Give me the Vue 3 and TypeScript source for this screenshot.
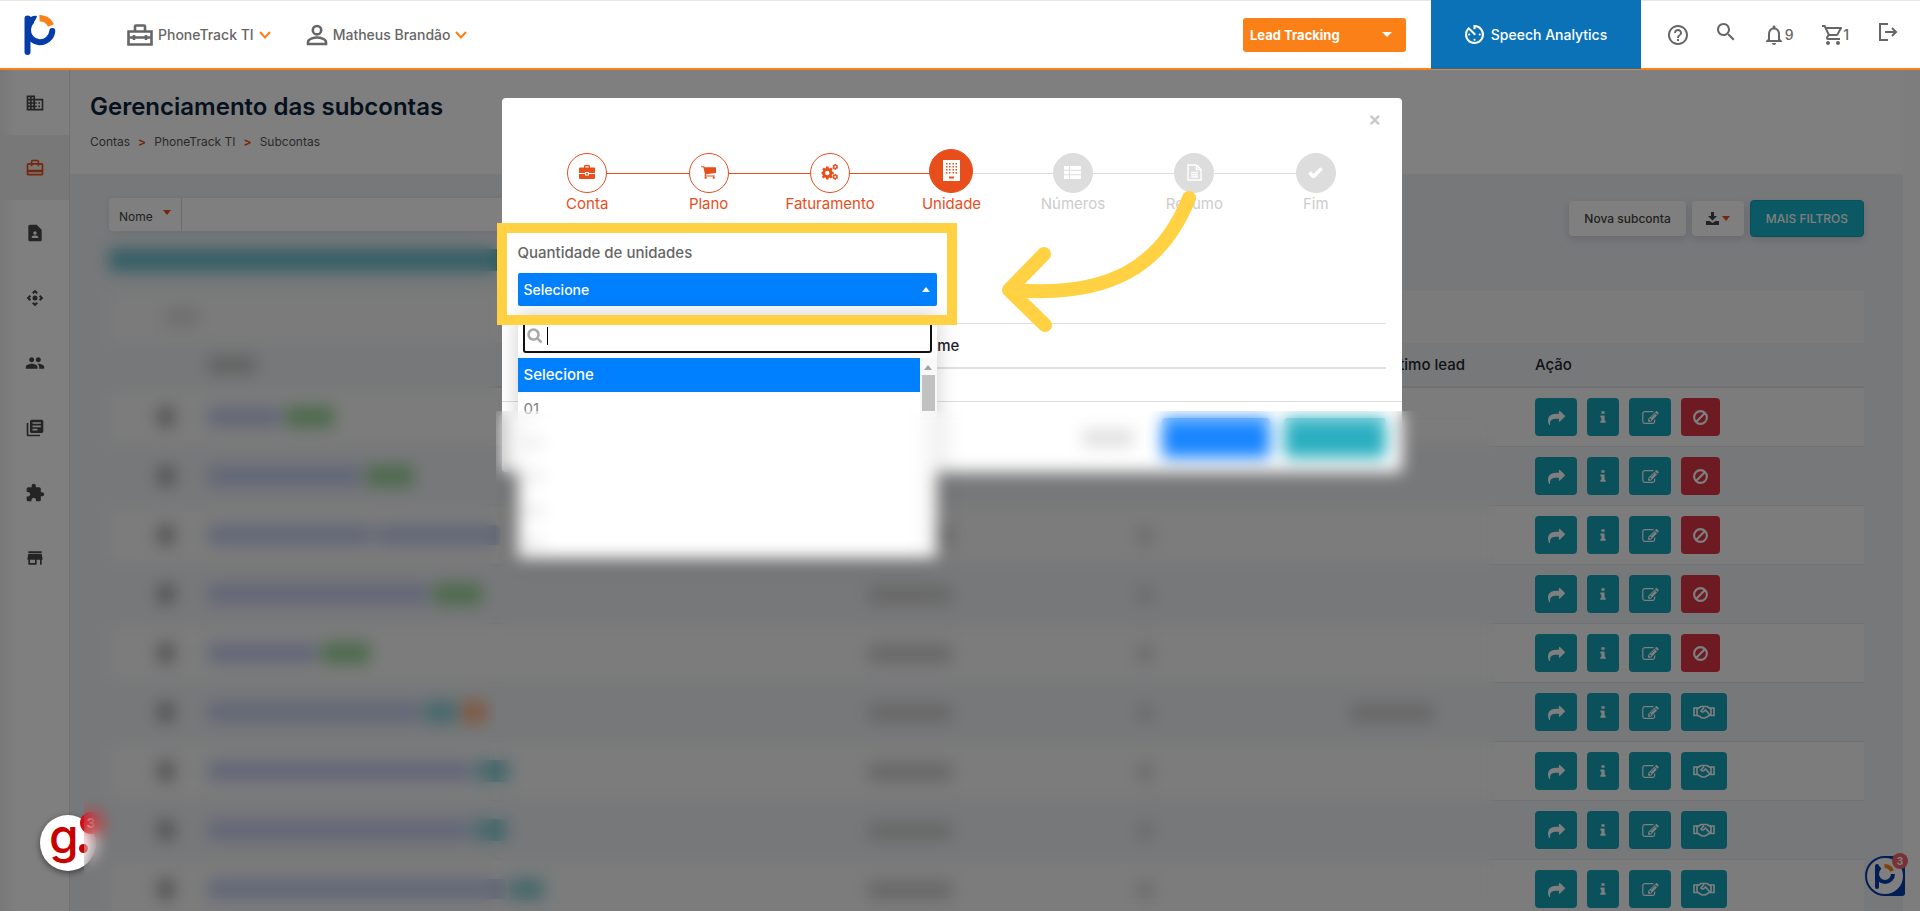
<script setup lang="ts">
import { h, ref } from 'vue'
import type { FunctionalComponent } from 'vue'

interface IconShape {
  box: string
  d: string
  stroke?: number
}

const icons: Record<string, IconShape> = {
  domain: { box: '0 0 24 24', d: 'M12 7V3H2v18h20V7H12zM6 19H4v-2h2v2zm0-4H4v-2h2v2zm0-4H4V9h2v2zm0-4H4V5h2v2zm4 12H8v-2h2v2zm0-4H8v-2h2v2zm0-4H8V9h2v2zm0-4H8V5h2v2zm10 12h-8v-2h2v-2h-2v-2h2v-2h-2V9h8v10zm-2-8h-2v2h2v-2zm0 4h-2v2h2v-2z' },
  travel: { box: '0 0 24 24', d: 'M20 6h-3V4c0-1.11-.89-2-2-2H9c-1.11 0-2 .89-2 2v2H4c-1.11 0-2 .89-2 2v11c0 1.11.89 2 2 2h16c1.11 0 2-.89 2-2V8c0-1.11-.89-2-2-2zM9 4h6v2H9V4zm11 15H4v-2h16v2zm0-5H4V8h3v2h2V8h6v2h2V8h3v6z' },
  contact: { box: '0 0 24 24', d: 'M14 2H6c-1.1 0-2 .9-2 2v16c0 1.1.9 2 2 2h12c1.1 0 2-.9 2-2V8l-6-6zm-2 8c1.1 0 2 .9 2 2s-.9 2-2 2-2-.9-2-2 .9-2 2-2zm4 8H8v-.57c0-.81.48-1.53 1.22-1.85.85-.37 1.79-.58 2.78-.58.99 0 1.93.21 2.78.58.74.32 1.22 1.04 1.22 1.85V18z' },
  camera: { box: '0 0 24 24', d: 'M15.54 5.54L13.77 7.3 12 5.54 10.23 7.3 8.46 5.54 12 2zm2.92 10l-1.76-1.77L18.46 12l-1.76-1.77 1.76-1.77L22 12zm-10 2.92l1.77-1.76L12 18.46l1.77-1.76 1.77 1.76L12 22zm-2.92-10l1.76 1.77L5.54 12l1.76 1.77-1.76 1.77L2 12zM12 9a3 3 0 1 0 0 6 3 3 0 0 0 0-6z' },
  people: { box: '0 0 24 24', d: 'M16 11c1.66 0 2.99-1.34 2.99-3S17.66 5 16 5c-1.66 0-3 1.34-3 3s1.34 3 3 3zm-8 0c1.66 0 2.99-1.34 2.99-3S9.66 5 8 5C6.34 5 5 6.34 5 8s1.34 3 3 3zm0 2c-2.33 0-7 1.17-7 3.5V19h14v-2.5c0-2.33-4.67-3.5-7-3.5zm8 0c-.29 0-.62.02-.97.05 1.16.84 1.97 1.97 1.97 3.45V19h6v-2.5c0-2.33-4.67-3.5-7-3.5z' },
  books: { box: '0 0 24 24', d: 'M4 6H2v14c0 1.1.9 2 2 2h14v-2H4V6zm16-4H8c-1.1 0-2 .9-2 2v12c0 1.1.9 2 2 2h12c1.1 0 2-.9 2-2V4c0-1.1-.9-2-2-2zm-1 9H9V9h10v2zm-4 4H9v-2h6v2zm4-8H9V5h10v2z' },
  puzzle: { box: '0 0 24 24', d: 'M20.5 11H19V7c0-1.1-.9-2-2-2h-4V3.5C13 2.12 11.88 1 10.5 1S8 2.12 8 3.5V5H4c-1.1 0-1.99.9-1.99 2v3.8H3.5c1.49 0 2.7 1.21 2.7 2.7s-1.21 2.7-2.7 2.7H2V20c0 1.1.9 2 2 2h3.8v-1.5c0-1.49 1.21-2.7 2.7-2.7 1.49 0 2.7 1.21 2.7 2.7V22H17c1.1 0 2-.9 2-2v-4h1.5c1.38 0 2.5-1.12 2.5-2.5S21.88 11 20.5 11z' },
  store: { box: '0 0 24 24', d: 'M20 4H4v2h16V4zm1 10v-2l-1-5H4l-1 5v2h1v6h10v-6h4v6h2v-6h1zm-9 4H6v-4h6v4z' },
  help: { box: '2 2 20 20', d: 'M11 18h2v-2h-2v2zm1-16C6.48 2 2 6.48 2 12s4.48 10 10 10 10-4.48 10-10S17.52 2 12 2zm0 18c-4.41 0-8-3.59-8-8s3.59-8 8-8 8 3.59 8 8-3.59 8-8 8zm0-14c-2.21 0-4 1.79-4 4h2c0-1.1.9-2 2-2s2 .9 2 2c0 2-3 1.75-3 5h2c0-2.25 3-2.5 3-5 0-2.21-1.79-4-4-4z' },
  search: { box: '3 3 18 18', d: 'M15.5 14h-.79l-.28-.27C15.41 12.59 16 11.11 16 9.5 16 5.91 13.09 3 9.5 3S3 5.91 3 9.5 5.91 16 9.5 16c1.61 0 3.09-.59 4.23-1.57l.27.28v.79l5 4.99L20.49 19l-4.99-5zm-6 0C7.01 14 5 11.99 5 9.5S7.01 5 9.5 5 14 7.01 14 9.5 11.99 14 9.5 14z' },
  bell: { box: '2 2 20 20', d: 'M12 22c1.1 0 2-.9 2-2h-4c0 1.1.9 2 2 2zm6-6v-5c0-3.07-1.63-5.64-4.5-6.32V4c0-.83-.67-1.5-1.5-1.5s-1.5.67-1.5 1.5v.68C7.64 5.36 6 7.92 6 11v5l-2 2v1h16v-1l-2-2zm-2 1H8v-6c0-2.48 1.51-4.5 4-4.5s4 2.02 4 4.5v6z' },
  cartLine: { box: '1 2 20 20', d: 'M15.55 13c.75 0 1.41-.41 1.75-1.03l3.58-6.49A.996.996 0 0020.01 4H5.21l-.94-2H1v2h2l3.6 7.59-1.35 2.44C4.52 15.37 5.48 17 7 17h12v-2H7l1.1-2h7.45zM6.16 6h12.15l-2.76 5H8.53L6.16 6zM7 18c-1.1 0-1.99.9-1.99 2S5.9 22 7 22s2-.9 2-2-.9-2-2-2zm10 0c-1.1 0-1.99.9-1.99 2s.89 2 1.99 2 2-.9 2-2-.9-2-2-2z' },
  logout: { box: '0 0 20 20', d: 'M10 2H2v16h8M7 10h11M14 6l4 4-4 4', stroke: 2 },
  toolbox: { box: '0 0 26 22', d: 'M1.5 7.5h23v13h-23zM8 7V2.5q0-1 1-1h8q1 0 1 1V7M1.500 13.500h23M7 11v5M19 11v5', stroke: 2.6 },
  person: { box: '0 0 22 22', d: 'M11 2a4.200 4.200 0 1 1 0 8.400a4.200 4.200 0 0 1 0-8.400zM2 20v-2c0-3 6-4.500 9-4.500s9 1.500 9 4.500v2z', stroke: 2.6 },
  chevron: { box: '0 0 12 8', d: 'M1 1l5 5.500L11 1', stroke: 2 },
  timer: { box: '3 3 18 18', d: 'M11 17c0 .55.45 1 1 1s1-.45 1-1-.45-1-1-1-1 .45-1 1zm0-14v4h2V5.080c3.390.490 6 3.390 6 6.920 0 3.870-3.130 7-7 7s-7-3.130-7-7c0-1.680.590-3.220 1.580-4.420L12 13l1.410-1.410-6.800-6.800v.020C4.420 6.450 3 9.050 3 12c0 4.970 4.020 9 9 9 4.970 0 9-4.030 9-9s-4.030-9-9-9h-1zm7 9c0-.55-.45-1-1-1s-1 .45-1 1 .45 1 1 1 1-.45 1-1zM6 12c0 .55.45 1 1 1s1-.45 1-1-.45-1-1-1-1 .45-1 1z' },
  share: { box: '0 0 1792 1536', d: 'M1792 640q0 26-19 45l-512 512q-19 19-45 19t-45-19-19-45v-256h-224q-98 0-175.5 6t-154 21.5-133 42.5-105.5 69.5-80 101-48.5 138.500-17.500 181q0 55 5 123 0 6 2.500 23.500t2.500 26.500q0 15-8.500 25t-23.500 10q-16 0-28-17-7-9-13-22t-13.500-30-10.500-24Q0 1286 0 1120q0-199 53-333 162-403 875-403h224v-256q0-26 19-45t45-19 45 19l512 512q19 19 19 45z' },
  info: { box: '-400 0 1440 1664', d: 'M640 1344v128q0 26-19 45t-45 19h-512q-26 0-45-19t-19-45v-128q0-26 19-45t45-19h64v-384h-64q-26 0-45-19t-19-45v-128q0-26 19-45t45-19h384q26 0 45 19t19 45v576h64q26 0 45 19t19 45zm-128-1152v192q0 26-19 45t-45 19h-256q-26 0-45-19t-19-45v-192q0-26 19-45t45-19h256q26 0 45 19t19 45z' },
  edit: { box: '0 128 1792 1408', d: 'M888 1184l116-116-152-152-116 116v56h96v96h56zm440-720q-16-16-33 1l-350 350q-17 17-1 33t33-1l350-350q17-17 1-33zm80 594v190q0 119-84.500 203.500t-203.500 84.500h-832q-119 0-203.500-84.500t-84.500-203.500v-832q0-119 84.500-203.500t203.500-84.500h832q63 0 117 25 15 7 18 23 3 17-9 29l-49 49q-14 14-32 8-23-6-45-6h-832q-66 0-113 47t-47 113v832q0 66 47 113t113 47h832q66 0 113-47t47-113v-126q0-13 9-22l64-64q15-15 35-7t20 29zm-96-738l288 288-672 672h-288v-288zm444 132l-92 92-288-288 92-92q28-28 68-28t68 28l152 152q28 28 28 68t-28 68z' },
  ban: { box: '0 0 16 16', d: 'M8 2a6 6 0 1 1 0 12a6 6 0 0 1 0-12zM3.800 12.200l8.400-8.400', stroke: 2 },
  handshake: { box: '0 0 22 14', d: 'M1 3h3v7.500H1zM21 3h-3v7.500h3zM4 4L8 1.500h6L18 4M4 10l5 3h3l6-3.500M11 2.500L8 6q1.500 2 3.500 0l1-1 4 4.500', stroke: 1.6 },
  briefcase: { box: '0 0 16 14', d: 'M5 2.500V1.200Q5 0 6.200 0h3.600Q11 0 11 1.200v1.300h4q1 0 1 1V8H10V7H6v1H0V3.500q0-1 1-1zM6.300 1.300v1.200h3.400V1.300zM0 9h6v1.500h4V9h6v4q0 1-1 1H1q-1 0-1-1zM7 8h2v1.500H7z' },
  cart: { box: '0 250 1664 1420', d: 'M640 1536q0 52-38 90t-90 38-90-38-38-90 38-90 90-38 90 38 38 90zm896 0q0 52-38 90t-90 38-90-38-38-90 38-90 90-38 90 38 38 90zm128-1088v512q0 24-16.500 42.500t-40.500 21.500l-1044 122q13 60 13 70 0 16-24 64h920q26 0 45 19t19 45-19 45-45 19h-1024q-26 0-45-19t-19-45q0-11 8-31.500t16-36 21.500-40 15.500-29.500l-177-823h-204q-26 0-45-19t-19-45 19-45 45-19h256q16 0 28.500 6.500t19.500 15.500 13 24.500 8 26 5.500 29.500 4.500 26h1201q26 0 45 19t19 45z' },
  gears: { box: '0 0 17 16', d: 'M4.600 2.500h2.400l.3 1.700 1 .4 1.400-1 1.500 1.600-1 1.400.4 1 1.600.3v2.300l-1.600.3-.4 1 1 1.400-1.600 1.500-1.400-1-1 .5-.3 1.600H4.600l-.3-1.700-1-.4-1.400 1-1.500-1.600 1-1.400-.5-1L0 9.900V7.900l1.300-.3.4-1-1-1.400 1.600-1.600 1.400 1 .6-.3zM5.800 6.800a2.200 2.200 0 1 0 0 4.400a2.200 2.200 0 0 0 0-4.400zM13 0h1.500l.3 1 .9-.2.8 1.200-.6.8.6.9-.8 1.200-.9-.3-.3 1.100H13l-.3-1-1 .2-.7-1.200.6-.9-.6-.8.7-1.200 1 .2zM13.700 1.800a1 1 0 1 0 0 2a1 1 0 0 0 0-2zM13 10h1.500l.3 1 .9-.2.8 1.200-.6.8.6.9-.8 1.200-.9-.3-.3 1.100H13l-.3-1-1 .2-.7-1.200.6-.9-.6-.8.7-1.200 1 .2zM13.700 11.800a1 1 0 1 0 0 2a1 1 0 0 0 0-2z' },
  building: { box: '0 0 17 21', d: 'M0 0h17v21H0zM3 3v1.500h1.500V3zM6 3v1.500h1.500V3zM9.500 3v1.500H11V3zM12.500 3v1.500H14V3zM3 6v1.500h1.500V6zM6 6v1.500h1.500V6zM9.500 6v1.500H11V6zM12.500 6v1.500H14V6zM3 9v1.500h1.500V9zM6 9v1.500h1.500V9zM9.500 9v1.500H11V9zM12.500 9v1.500H14V9zM3 12v1.500h1.500V12zM6 12v1.500h1.500V12zM9.500 12v1.500H11V12zM12.500 12v1.500H14V12zM6 16.500v2h5v-2z' },
  list: { box: '0 0 17 13', d: 'M0 0h5v3.700H0zM6 0h11v3.700H6zM0 4.700h5v3.600H0zM6 4.700h11v3.600H6zM0 9.300h5V13H0zM6 9.300h11V13H6z' },
  doc: { box: '0 0 15 17', d: 'M1 1h8.500L14 5.500V16H1zM9.500 1v4.500H14M4 8.500h7M4 10.700h7M4 13h7', stroke: 1.4 },
  check: { box: '0 0 15 11', d: 'M1.500 5.500l4 4 8-8', stroke: 3.6 },
  download: { box: '0 0 13 13', d: 'M5 0h3v4h3L6.500 8.500 2 4h3zM0 9h3.500l3 2 3-2H13v4H0z' },
  lens: { box: '0 0 16 16', d: 'M6.500 1.500a5 5 0 1 1 0 10a5 5 0 0 1 0-10zM10.200 10.200L14.500 14.500', stroke: 2.6 },
}

const Icon: FunctionalComponent<{ name: string; w: number; h?: number }> = (props) => {
  const shape = icons[props.name]
  return h(
    'svg',
    { viewBox: shape.box, width: props.w, height: props.h ?? props.w, 'aria-hidden': 'true' },
    [
      h('path', {
        d: shape.d,
        'fill-rule': 'evenodd',
        fill: shape.stroke ? 'none' : 'currentColor',
        stroke: shape.stroke ? 'currentColor' : 'none',
        'stroke-width': shape.stroke ?? 0,
      }),
    ],
  )
}
Icon.props = ['name', 'w', 'h']

const sidebar = [
  { icon: 'domain', label: 'Empresa' },
  { icon: 'travel', label: 'Contas' },
  { icon: 'contact', label: 'Contatos' },
  { icon: 'camera', label: 'Rotas' },
  { icon: 'people', label: 'Pessoas' },
  { icon: 'books', label: 'Biblioteca' },
  { icon: 'puzzle', label: 'Extensões' },
  { icon: 'store', label: 'Loja' },
]

const steps = [
  { label: 'Conta', icon: 'briefcase', w: 16, h: 14, state: 'done' },
  { label: 'Plano', icon: 'cart', w: 15, h: 13, state: 'done' },
  { label: 'Faturamento', icon: 'gears', w: 18, h: 16, state: 'done' },
  { label: 'Unidade', icon: 'building', w: 17, h: 21, state: 'active' },
  { label: 'Números', icon: 'list', w: 17, h: 13, state: 'todo' },
  { label: 'Resumo', icon: 'doc', w: 15, h: 17, state: 'todo' },
  { label: 'Fim', icon: 'check', w: 15, h: 11, state: 'todo' },
]

interface Row {
  name: number[]
  tags: { tone: string; w: number }[]
  date?: boolean
  lead?: boolean
  blocked?: boolean
}

const rows: Row[] = [
  { name: [74], tags: [{ tone: 'green', w: 48 }], blocked: true },
  { name: [154], tags: [{ tone: 'green', w: 48 }], blocked: true },
  { name: [164, 124], tags: [], date: true, blocked: true },
  { name: [222], tags: [{ tone: 'green', w: 48 }], date: true, blocked: true },
  { name: [110], tags: [{ tone: 'green', w: 48 }], date: true, blocked: true },
  { name: [212], tags: [{ tone: 'teal', w: 34 }, { tone: 'orange', w: 24 }], date: true, lead: true },
  { name: [264], tags: [{ tone: 'teal', w: 34 }], date: true },
  { name: [262], tags: [{ tone: 'teal', w: 34 }], date: true },
  { name: [298], tags: [{ tone: 'teal', w: 34 }], date: true },
]

const options = ['Selecione', '01', '02', '03', '04', '05']
const quantity = ref('Selecione')
const query = ref('')
</script>

<template>
  <div class="page">
    <header class="topbar">
      <a href="#" class="brand" aria-label="PhoneTrack">
        <svg viewBox="0 0 32 40" width="32" height="40">
          <path d="M3.500 3.500V37" stroke="#053ca8" stroke-width="6" stroke-linecap="round" />
          <path d="M1 2Q4 0 7 2q3-2 6-1-1 5-6 8z" fill="#053ca8" />
          <path d="M28.300 16A12 12 0 0 1 4 14Q5 9 7 7" fill="none" stroke="#053ca8" stroke-width="6" stroke-linecap="round" />
          <path d="M15.500 3.200A12 12 0 0 1 27 10.500" fill="none" stroke="#fc8018" stroke-width="6.400" />
        </svg>
      </a>
      <button class="menu account"><Icon name="toolbox" :w="26" :h="22" />PhoneTrack TI<Icon class="chev" name="chevron" :w="12" :h="8" /></button>
      <button class="menu user"><Icon name="person" :w="22" />Matheus Brandão<Icon class="chev" name="chevron" :w="12" :h="8" /></button>
      <button class="product">Lead Tracking<span class="tri down"></span></button>
      <a href="#" class="speech"><Icon name="timer" :w="19" />Speech Analytics</a>
      <nav class="tools" aria-label="Ferramentas">
        <button aria-label="Ajuda"><Icon name="help" :w="20" /></button>
        <button aria-label="Buscar" class="high"><Icon name="search" :w="18" /></button>
        <button aria-label="Notificações"><Icon name="bell" :w="20" />9</button>
        <button aria-label="Carrinho"><Icon name="cartLine" :w="20" />1</button>
        <button aria-label="Sair" class="high"><Icon name="logout" :w="20" /></button>
      </nav>
    </header>

    <div class="body">
      <aside class="side">
        <a v-for="(item, i) in sidebar" :key="item.icon" href="#" :aria-label="item.label" :class="{ current: i === 1 }">
          <Icon :name="item.icon" :w="20" />
        </a>
      </aside>
      <main class="content">
        <section class="heading">
          <h1>Gerenciamento das subcontas</h1>
          <nav class="crumbs" aria-label="Trilha">
            <a href="#">Contas</a><b>&gt;</b><a href="#">PhoneTrack TI</a><b>&gt;</b><span>Subcontas</span>
          </nav>
        </section>
        <section class="panel">
          <div class="filters">
            <div class="search">
              <button>Nome<span class="tri down red"></span></button>
              <input type="text" aria-label="Pesquisar por nome" />
            </div>
            <div class="actions">
              <button>Nova subconta</button>
              <button class="dl" aria-label="Baixar"><Icon name="download" :w="13" /><span class="tri down red"></span></button>
              <button class="more">MAIS FILTROS</button>
            </div>
          </div>
          <div class="notice"></div>
          <div class="caption"><i class="smudge grey"></i></div>
          <table class="grid">
            <colgroup>
              <col class="c1" /><col class="c2" /><col class="c3" /><col class="c4" /><col class="c5" /><col />
            </colgroup>
            <thead>
              <tr>
                <th></th>
                <th><i class="smudge dark"></i></th>
                <th></th>
                <th></th>
                <th class="last">Último lead</th>
                <th>Ação</th>
              </tr>
            </thead>
            <tbody>
              <tr v-for="(row, i) in rows" :key="i">
                <td class="pick"><i class="smudge box"></i></td>
                <td>
                  <div class="names">
                    <i v-for="(w, n) in row.name" :key="n" class="smudge link" :style="{ width: w + 'px' }"></i>
                    <i v-for="tag in row.tags" :key="tag.tone" class="smudge tag" :class="tag.tone" :style="{ width: tag.w + 'px' }"></i>
                  </div>
                </td>
                <td><i v-if="row.date" class="smudge date"></i></td>
                <td><i v-if="row.date" class="smudge num"></i></td>
                <td><i v-if="row.lead" class="smudge date"></i></td>
                <td>
                  <div class="ops">
                    <button class="w42" aria-label="Acessar"><Icon name="share" :w="17" :h="15" /></button>
                    <button class="w32" aria-label="Detalhes"><Icon name="info" :w="12" :h="14" /></button>
                    <button class="w42" aria-label="Editar"><Icon name="edit" :w="17" :h="13" /></button>
                    <button v-if="row.blocked" class="w39 danger" aria-label="Bloquear"><Icon name="ban" :w="17" /></button>
                    <button v-else class="w46" aria-label="Parceria"><Icon name="handshake" :w="22" :h="14" /></button>
                  </div>
                </td>
              </tr>
            </tbody>
          </table>
        </section>
      </main>
      <button class="chat" aria-label="Chat">
        <svg viewBox="0 0 40 40" width="40" height="40">
          <path d="M20 0H40V37q0 3-3 3H20z" fill="#053ca8" />
          <circle cx="20" cy="20" r="19" fill="#fff" stroke="#053ca8" stroke-width="2" />
          <path d="M38.500 20Q38 36 22 39h15q2 0 2-2z" fill="#053ca8" />
          <path d="M12 10v21" stroke="#053ca8" stroke-width="4" stroke-linecap="round" />
          <path d="M28 18a8 8 0 0 1-16 0q0-4 3-7" fill="none" stroke="#053ca8" stroke-width="4" />
          <path d="M19.500 10a8 8 0 0 1 7.500 5" fill="none" stroke="#fc8018" stroke-width="4" />
        </svg>
        <span>3</span>
      </button>
    </div>

    <div class="overlay">
      <div class="modal" role="dialog" aria-label="Nova subconta">
        <div class="modal-head"><button aria-label="Fechar">×</button></div>
        <ol class="steps">
          <li v-for="step in steps" :key="step.label" :class="step.state">
            <span class="dot"><Icon :name="step.icon" :w="step.w" :h="step.h" /></span>
            <span>{{ step.label }}</span>
          </li>
        </ol>
        <div class="field">
          <label for="quantity">Quantidade de unidades</label>
          <div class="picker">
            <select id="quantity" v-model="quantity">
              <option v-for="o in options" :key="o" :value="o">{{ o }}</option>
            </select>
            <span class="tri up"></span>
          </div>
          <div class="drop">
            <div class="find">
              <Icon name="lens" :w="16" />
              <span class="cursor"></span>
              <input v-model="query" type="text" aria-label="Pesquisar quantidade" />
            </div>
            <div class="scroller">
              <ul role="listbox">
                <li v-for="o in options" :key="o" role="option" :class="{ on: o === quantity }">{{ o }}</li>
              </ul>
              <div class="bar"><span class="tri up small"></span><span class="thumb"></span></div>
            </div>
          </div>
          <div class="mark"></div>
        </div>
        <table class="units">
          <thead>
            <tr><th class="half"></th><th>Nome</th></tr>
          </thead>
        </table>
        <div class="modal-foot">
          <i class="smudge cancel"></i>
          <i class="smudge back"></i>
          <i class="smudge next"></i>
        </div>
        <svg class="arrow" viewBox="0 0 208 156" width="208" height="156" fill="none" stroke="#ffd143" stroke-width="14" stroke-linecap="round" stroke-linejoin="round" aria-hidden="true">
          <path d="M189 18C163 84 112 118 14 110M44 74L9 110L45 145" />
        </svg>
      </div>
    </div>

    <button class="guide" aria-label="Guia"><span class="g">g</span><span class="point"></span><span class="count">3</span></button>
    <div class="frost left"></div>
    <div class="frost lower"></div>
  </div>
</template>

<style>
body {
  margin: 0;
  background: #fff;
}
</style>

<style scoped>
.page {
  position: relative;
  height: 100vh;
  overflow: hidden;
  font-family: Inter, 'Liberation Sans', sans-serif;
  font-size: 14px;
  color: #212529;
}
.page *,
.page *::before,
.page *::after {
  box-sizing: border-box;
}
button,
input,
select {
  font: inherit;
  color: inherit;
  border: 0;
  padding: 0;
  margin: 0;
  background: none;
}
a {
  color: inherit;
  text-decoration: none;
}
svg {
  display: block;
  flex: none;
}
.tri {
  width: 0;
  height: 0;
  border: 5px solid transparent;
}
.tri.down {
  border-top-color: #fff;
  border-bottom: 0;
}
.tri.up {
  border-width: 4px;
  border-bottom: 5px solid #fff;
  border-top: 0;
}
.tri.red {
  border-width: 4px;
  border-top-width: 5px;
  border-bottom: 0;
  border-top-color: #e84e1b;
}

/* top bar */
.topbar {
  display: flex;
  align-items: center;
  height: 70px;
  border-top: 1px solid #e8e8e8;
  border-bottom: 2px solid #fc8018;
  background: #fff;
  color: #666;
  font-weight: 500;
}
.brand {
  margin: 0 71px 0 24px;
}
.menu {
  display: flex;
  align-items: center;
  gap: 5px;
}
.account {
  margin-right: 35px;
}
.chev {
  color: #fc8018;
}
.product {
  display: flex;
  align-items: center;
  justify-content: space-between;
  width: 163px;
  height: 34px;
  margin: 0 25px 0 auto;
  padding: 0 14px 0 7px;
  border-radius: 3px;
  background: #fc8018;
  color: #fff;
  font-size: 13px;
  font-weight: 700;
}
.speech {
  display: flex;
  align-items: center;
  justify-content: center;
  gap: 7px;
  align-self: stretch;
  width: 210px;
  margin: -1px 0;
  background: #0b72b7;
  color: #fff;
}
.tools {
  display: flex;
  align-items: center;
  justify-content: space-between;
  width: 230px;
  margin: 0 22px 0 27px;
}
.tools button {
  display: flex;
  align-items: center;
  gap: 1px;
}
.tools .high {
  padding-bottom: 6px;
}

/* page body */
.body {
  position: relative;
  display: flex;
  height: calc(100% - 70px);
  padding-right: 17px;
  background: #fafafa;
}
.side {
  width: 70px;
  flex: none;
  border-right: 1px solid #e2e2e2;
  background: linear-gradient(90deg, #f0f0f0, #fff 16px);
}
.side a {
  display: flex;
  align-items: center;
  justify-content: center;
  height: 65px;
  color: #484848;
}
.side .current {
  background: #f1f1f1;
  color: #e84e1b;
}
.content {
  flex: 1;
  min-width: 0;
  background: #eef1f5;
}
.heading {
  height: 104px;
  padding: 22px 20px 0;
  background: #fff;
}
h1 {
  margin: 0;
  font-size: 24px;
  line-height: 30px;
  font-weight: 600;
  color: #0b2239;
}
.crumbs {
  display: flex;
  gap: 8px;
  margin-top: 12px;
  font-size: 12px;
  line-height: 16px;
  color: #555;
}
.crumbs b {
  color: #e84e1b;
}
.panel {
  padding: 24px 39px 0;
}
.filters {
  display: flex;
  justify-content: space-between;
}
.search {
  display: flex;
  width: 520px;
  height: 33px;
  border-radius: 4px;
  background: #fff;
  box-shadow: 0 2px 8px rgba(60, 70, 120, 0.12);
}
.search button {
  display: flex;
  justify-content: space-between;
  align-items: center;
  width: 73px;
  padding: 3px 10px 0;
  border-right: 1px solid #d6d6d6;
  font-size: 12px;
  color: #444;
}
.search .tri {
  margin-bottom: 8px;
}
.search input {
  flex: 1;
  min-width: 0;
}
.actions {
  display: flex;
  align-items: center;
  gap: 6px;
  height: 39px;
  padding-top: 2px;
}
.actions button {
  height: 35px;
  padding: 0 15px;
  border-radius: 4px;
  background: #fff;
  box-shadow: 0 3px 8px rgba(60, 60, 100, 0.18);
  font-size: 12px;
  font-weight: 500;
  color: #444;
}
.actions .dl {
  display: flex;
  align-items: center;
  gap: 3px;
  padding: 0 14px;
}
.actions .more {
  height: 37px;
  border: 1px solid #14a0b6;
  background: #17b2c8;
  color: #fff;
}
.notice {
  width: 390px;
  height: 22px;
  margin: 12px 0 20px;
  background: #64bcc8;
}
.caption {
  display: flex;
  align-items: center;
  height: 52px;
  padding-left: 56px;
  background: #f6f6f6;
}
.grid {
  width: 100%;
  table-layout: fixed;
  border-collapse: separate;
  border-spacing: 0;
}
.c1 {
  width: 99px;
}
.c2 {
  width: 660px;
}
.c3 {
  width: 262px;
}
.c4 {
  width: 220px;
}
.c5 {
  width: 185px;
}
.grid th {
  height: 45px;
  padding: 0;
  border-bottom: 2px solid #dee2e6;
  text-align: left;
  font-size: 15px;
  font-weight: 500;
}
.grid .last {
  padding-right: 70px;
  text-align: right;
}
.grid td {
  height: 59px;
  padding: 0;
  border-bottom: 1px solid #e0e2e5;
}
.grid tbody tr:nth-child(odd) td {
  background: #f8f8f8;
}
.pick {
  text-align: center;
}
.names {
  display: flex;
  align-items: center;
  gap: 4px;
}
.smudge {
  display: inline-block;
  height: 18px;
  border-radius: 4px;
  vertical-align: middle;
}
.smudge.link {
  height: 20px;
  background: #c4cfee;
}
.smudge.tag {
  height: 22px;
}
.smudge.green {
  background: #9cd49a;
}
.smudge.teal {
  background: #8fd0d8;
}
.smudge.orange {
  background: #ffb080;
}
.smudge.box {
  width: 16px;
  height: 20px;
  margin-left: 14px;
  background: #a0a0a0;
}
.smudge.grey {
  width: 34px;
  background: #dcdcdc;
}
.smudge.dark {
  width: 48px;
  background: #c4c4c4;
}
.smudge.date {
  width: 84px;
  background: #cfcfcf;
}
.smudge.num {
  width: 14px;
  margin-left: 8px;
  background: #d2d2d2;
}
.ops {
  display: flex;
  gap: 10px;
}
.ops button {
  display: flex;
  align-items: center;
  justify-content: center;
  height: 38px;
  border-radius: 4px;
  background: #17a2b8;
  color: #fff;
}
.ops .w42 {
  width: 42px;
}
.ops .w32 {
  width: 32px;
}
.ops .w39 {
  width: 39px;
}
.ops .w46 {
  width: 46px;
}
.ops .danger {
  background: #dc3545;
}
.chat {
  position: absolute;
  right: 15px;
  bottom: 15px;
}
.chat span {
  position: absolute;
  top: -3px;
  right: -3px;
  width: 16px;
  border-radius: 8px;
  background: #f0656b;
  color: #fff;
  font-size: 10px;
  line-height: 16px;
  font-weight: 700;
}

/* dialog */
.overlay {
  position: absolute;
  inset: 70px 0 0;
  display: flex;
  justify-content: center;
  align-items: flex-start;
  padding: 28px 17px 0 0;
  background: rgba(0, 0, 0, 0.5);
}
.modal {
  position: relative;
  width: 900px;
  border-radius: 4px;
  background: #fff;
}
.modal-head {
  display: flex;
  justify-content: flex-end;
  height: 51px;
  padding: 10px 20px 0 0;
}
.modal-head button {
  height: 22px;
  font-size: 20px;
  line-height: 22px;
  font-weight: 600;
  color: #c8c8c8;
}
.steps {
  display: grid;
  grid-template-columns: repeat(7, 1fr);
  margin: 0 25px;
  padding: 0;
  list-style: none;
  font-size: 15px;
  line-height: 22px;
}
.steps li {
  position: relative;
  display: flex;
  flex-direction: column;
  align-items: center;
  justify-content: flex-end;
  height: 66px;
  color: #e84e1b;
}
.steps li::before {
  content: '';
  position: absolute;
  top: 24px;
  left: 50%;
  width: 100%;
  height: 1px;
  background: #e84e1b;
}
.steps .active::before,
.steps .todo::before {
  background: #ddd;
}
.steps li:last-child::before {
  display: none;
}
.dot {
  position: relative;
  display: flex;
  align-items: center;
  justify-content: center;
  width: 40px;
  height: 40px;
  padding-bottom: 2px;
  border: 1px solid #e84e1b;
  border-radius: 50%;
  background: #fff;
}
.active .dot {
  width: 44px;
  height: 44px;
  background: #e84e1b;
  color: #fff;
}
.steps .todo {
  color: #ccc;
}
.todo .dot {
  border-color: #ddd;
  background: #ddd;
  color: #fff;
}
.field {
  position: relative;
  width: calc(50% - 31px);
  margin: 28px 16px 17px;
}
.field label {
  display: block;
  margin-bottom: 10px;
  font-size: 15px;
  line-height: 20px;
  font-weight: 500;
  color: #666;
}
.picker {
  position: relative;
}
.picker select {
  display: block;
  width: 100%;
  height: 33px;
  padding: 0 6px;
  border-radius: 2px;
  appearance: none;
  background: #0080ff;
  color: #fff;
  font-weight: 500;
}
.picker .tri {
  position: absolute;
  top: 14px;
  right: 7px;
}
.drop {
  position: absolute;
  top: 72px;
  left: 0;
  right: 0;
  background: #fff;
  box-shadow: 0 0 20px rgba(0, 0, 0, 0.2);
}
.find {
  display: flex;
  align-items: center;
  gap: 4px;
  height: 34px;
  margin: 4px 5px 5px;
  padding: 0 4px 0 2px;
  border: 2px solid #101010;
  border-radius: 3px;
  color: #aaa;
}
.cursor {
  width: 1px;
  height: 18px;
  background: #000;
}
.find input {
  flex: 1;
  outline: 0;
}
.scroller {
  display: flex;
  height: 200px;
  overflow: hidden;
}
.scroller ul {
  flex: 1;
  margin: 0;
  padding: 0;
  list-style: none;
}
.scroller li {
  height: 34px;
  padding: 0 6px;
  font-size: 15px;
  line-height: 34px;
  color: #808080;
}
.scroller li:nth-child(n + 3) {
  color: #c4c4c4;
}
.scroller .on {
  background: #0080ff;
  color: #fff;
  font-weight: 500;
}
.bar {
  display: flex;
  flex-direction: column;
  align-items: center;
  width: 17px;
  padding-top: 7px;
  background: #f8f8f8;
}
.bar .tri {
  border-bottom-color: #a3a3a3;
}
.thumb {
  width: 13px;
  height: 36px;
  margin-top: 5px;
  background: #c1c1c1;
}
.mark {
  position: absolute;
  inset: -20px -20px -19px -21px;
  border: 10px solid #ffd143;
}
.units {
  width: calc(100% - 32px);
  margin: 0 16px;
  border-top: 1px solid #dee2e6;
  border-spacing: 0;
  table-layout: fixed;
}
.units th {
  height: 45px;
  padding: 0;
  border-bottom: 2px solid #dee2e6;
  text-align: left;
  font-size: 15px;
  font-weight: 500;
}
.units .half {
  width: 46%;
}
.modal-foot {
  display: flex;
  align-items: center;
  justify-content: flex-end;
  gap: 14px;
  height: 71px;
  margin-top: 32px;
  padding: 2px 16px 0;
  border-top: 1px solid #dcdcdc;
}
.cancel {
  width: 52px;
  margin-right: 14px;
  background: #e0e0e0;
}
.smudge.back,
.smudge.next {
  width: 108px;
  height: 40px;
  background: #1a86ff;
}
.smudge.next {
  width: 102px;
  background: #2bafc1;
}
.arrow {
  position: absolute;
  top: 82px;
  right: 194px;
}

/* floating guide and blurred panes */
.guide {
  position: absolute;
  left: 40px;
  bottom: 40px;
  width: 56px;
  height: 56px;
  border-radius: 50%;
  background: #fff;
  box-shadow: 0 2px 6px rgba(0, 0, 0, 0.5);
  color: #c80000;
}
.guide .g {
  position: absolute;
  left: 9px;
  top: -7px;
  font-size: 48px;
  line-height: 56px;
  font-weight: 500;
}
.guide .point {
  position: absolute;
  left: 39px;
  top: 29px;
  width: 9px;
  height: 9px;
  border-radius: 50%;
  background: #c80000;
}
.guide .count {
  position: absolute;
  top: -3px;
  right: -6px;
  width: 22px;
  border-radius: 11px;
  background: #d01018;
  color: #fff;
  font-size: 13px;
  line-height: 22px;
  font-weight: 700;
}
.frost {
  position: absolute;
  bottom: 0;
  backdrop-filter: blur(8px);
  pointer-events: none;
}
.frost.left {
  top: 235px;
  left: 84px;
  right: calc(50% + 464px);
}
.frost.lower {
  top: 411px;
  left: calc(50% - 464px);
  right: 425px;
}
</style>
